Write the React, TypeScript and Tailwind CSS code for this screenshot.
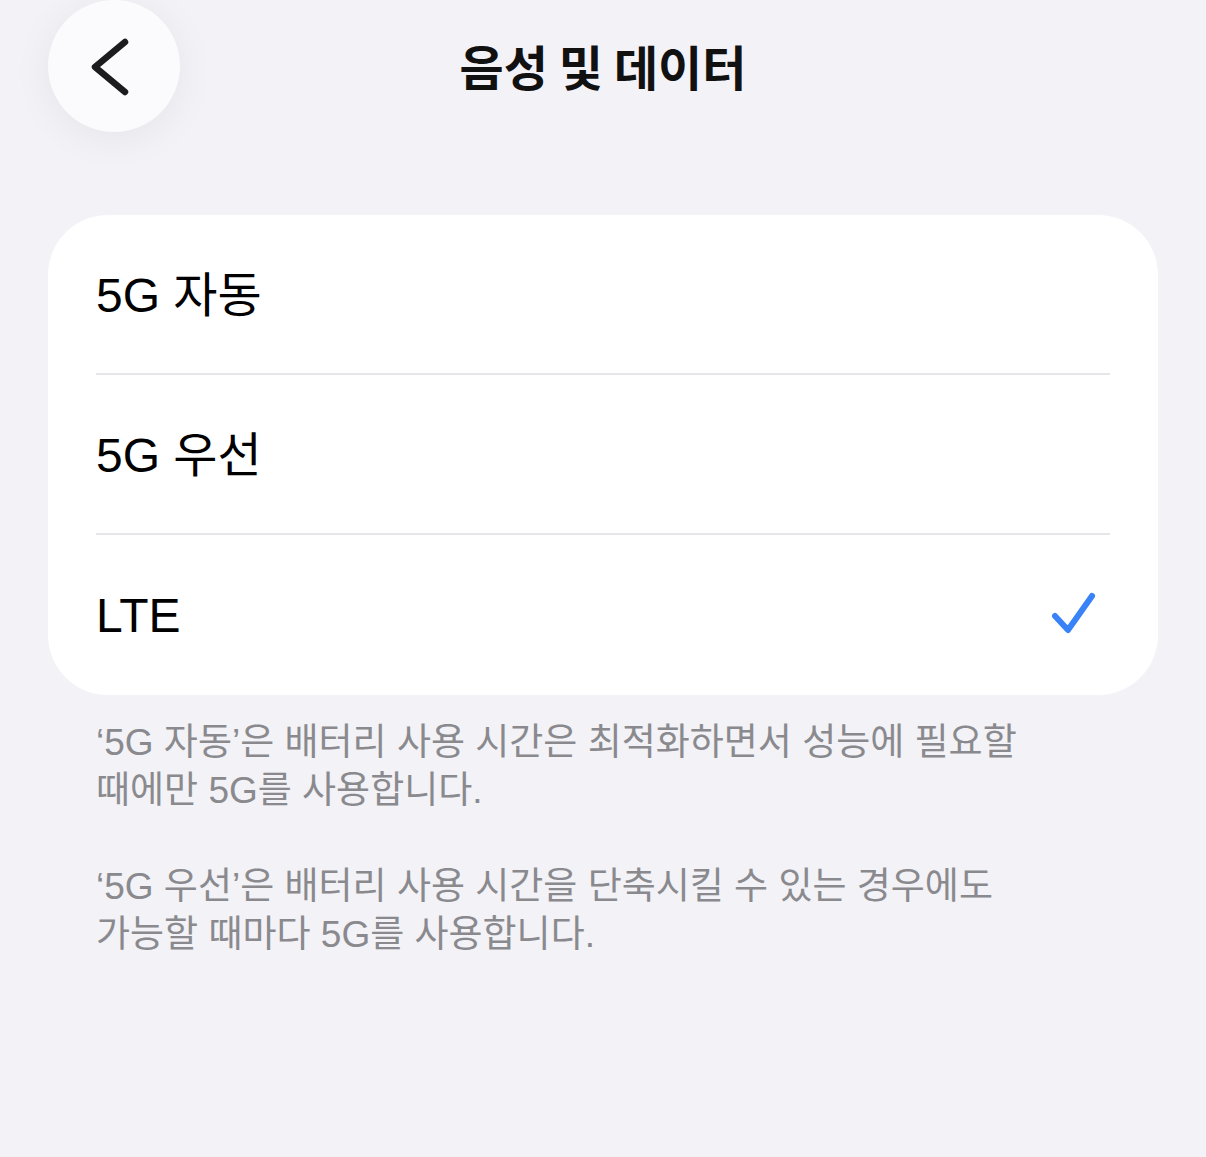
import { Fragment } from "react"

const options = [
    { label: "5G 자동", checked: false },
    { label: "5G 우선", checked: false },
    { label: "LTE", checked: true },
]

const font = { fontFamily: '"Liberation Sans", "Noto Sans CJK KR", sans-serif' }

const App = () => {
    return (
        <div className="min-h-[1157px] bg-[#f2f2f7] px-[48px]" style={font}>
            {/* header */}
            <div className="grid grid-cols-[1fr_auto_1fr] items-center h-[132px]">
                <button className="w-[132px] h-[132px] rounded-full bg-[#fbfbfd] shadow-[0_6px_40px_rgba(0,0,0,0.06)] flex items-center justify-center">
                    <svg width="132" height="132" viewBox="0 0 132 132" fill="none">
                        <path d="M77 42 L47 67 L77 92" stroke="#1c1c1e" strokeWidth="6.5" strokeLinecap="round" strokeLinejoin="round" />
                    </svg>
                </button>
                <h1 className="text-[48px] font-bold text-[#111] leading-none -mt-[2px]" style={{ fontFamily: '"Noto Sans CJK KR", sans-serif' }}>음성 및 데이터</h1>
                <div />
            </div>

            {/* options card */}
            <div className="mt-[83px] bg-white rounded-[60px] overflow-hidden pb-[2px]">
                {options.map((o, i) => (
                    <Fragment key={o.label}>
                        {i > 0 && <div className="mx-[48px] h-[2px] bg-[#e5e5ea]" />}
                        <div className="h-[158px] flex items-center justify-between pl-[48px] pr-[62px] pt-[4px]">
                            <span className="text-[48px] text-black leading-none">{o.label}</span>
                            {o.checked && (
                                <svg width="48" height="48" viewBox="0 0 48 48" fill="none">
                                    <path d="M7 24 L20 38 L44 4" stroke="#3a82f7" strokeWidth="6" strokeLinecap="round" strokeLinejoin="round" />
                                </svg>
                            )}
                        </div>
                    </Fragment>
                ))}
            </div>

            {/* footnote */}
            <div className="mt-[24px] px-[48px] text-[37px] leading-[48px] text-[#8a8a8e] flex flex-col gap-[48px]">
                <p>‘5G 자동’은 배터리 사용 시간은 최적화하면서 성능에 필요할<br />때에만 5G를 사용합니다.</p>
                <p>‘5G 우선’은 배터리 사용 시간을 단축시킬 수 있는 경우에도<br />가능할 때마다 5G를 사용합니다.</p>
            </div>
        </div>
    )
}

export default App
